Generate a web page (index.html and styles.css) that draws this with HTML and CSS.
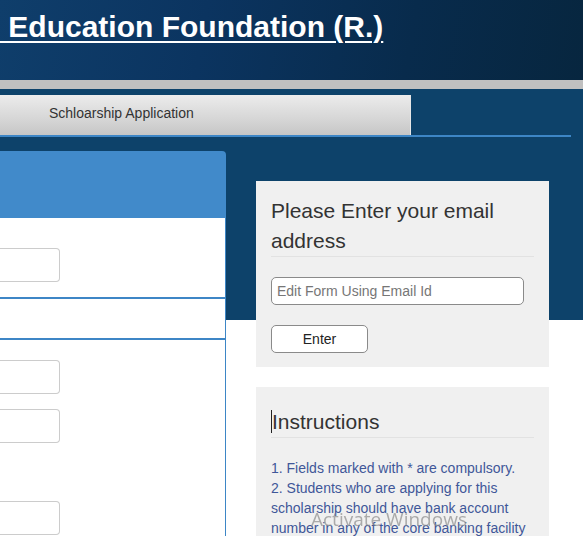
FILE: index.html
```html
<!DOCTYPE html>
<html>
<head>
<meta charset="utf-8">
<link rel="stylesheet" href="styles.css">
</head>
<body>
<header class="site-header">
  <h1 class="site-title"><a href="#">&nbsp;Education Foundation (R.)</a></h1>
</header>
<div class="gray-bar"></div>
<div class="main">
  <nav class="nav">
    <div class="tab">Schloarship Application</div>
  </nav>
  <div class="nav-line"></div>
  <div class="content">
    <section class="form-panel">
      <div class="panel-head"></div>
      <div class="panel-body">
        <div class="field first"><div class="input"></div></div>
        <div class="sub-bar"></div>
        <div class="field f2"><div class="input"></div></div>
        <div class="field f3"><div class="input"></div></div>
        <div class="field f4"><div class="input"></div></div>
      </div>
    </section>
    <aside class="side">
      <div class="card">
        <h3 class="card-title">Please Enter your email address</h3>
        <hr class="rule">
        <input class="email" type="text" placeholder="Edit Form Using Email Id">
        <button class="enter-btn">Enter</button>
      </div>
      <div class="card card-instr">
        <h3 class="card-title"><span class="caret"></span>Instructions</h3>
        <hr class="rule">
        <p class="instr">1. Fields marked with * are compulsory.<br>2. Students who are applying for this scholarship should have bank account number in any of the core banking facility</p>
      </div>
    </aside>
  </div>
</div>
<div class="watermark">Activate Windows</div>
</body>
</html>
```

FILE: styles.css
```css
html, body {
  margin: 0;
  padding: 0;
  overflow: hidden;
}
body {
  font-family: "Liberation Sans", Arial, sans-serif;
  background: #ffffff;
  width: 583px;
  height: 536px;
}
.site-header {
  height: 80px;
  background: linear-gradient(100deg, #0f3e6b 0%, #0b3460 35%, #082b4c 70%, #07263f 100%);
}
.site-title {
  margin: 0;
  padding-top: 9px;
  font-size: 30px;
  font-weight: bold;
  line-height: 36px;
}
.site-title a {
  color: #ffffff;
  text-decoration: underline;
  text-decoration-thickness: 2px;
  text-underline-offset: 4px;
}
.gray-bar {
  height: 9px;
  background: #c0c0c0;
}
.main {
  background: linear-gradient(#0d426a 0, #0d426a 231px, #ffffff 231px);
  height: 447px;
  overflow: hidden;
}
.nav {
  padding-top: 6px;
  display: flex;
}
.tab {
  width: 411px;
  height: 40px;
  box-sizing: border-box;
  border-right: 1px solid #e6e6e6;
  background: linear-gradient(#ececec, #d6d6d6 60%, #c6c6c6);
  color: #333333;
  font-size: 14px;
  line-height: 36px;
  padding-left: 49px;
}
.nav-line {
  width: 571px;
  height: 2px;
  background: #3d86c6;
}
.content {
  display: flex;
  gap: 30px;
  align-items: flex-start;
}
.form-panel {
  width: 226px;
  margin-top: 14px;
}
.panel-head {
  height: 67px;
  background: #418aca;
  border-top-right-radius: 4px;
}
.panel-body {
  background: #ffffff;
  border-right: 1px solid #3d86c6;
  height: 318px;
  box-sizing: border-box;
  overflow: hidden;
}
.field {
  display: flex;
}
.input {
  width: 60px;
  height: 34px;
  box-sizing: border-box;
  border: 1px solid #cccccc;
  border-left: none;
  border-radius: 0 4px 4px 0;
  background: #ffffff;
}
.first { padding-top: 30px; padding-bottom: 15px; }
.sub-bar {
  height: 39px;
  border-top: 2px solid #3d86c6;
  border-bottom: 2px solid #3d86c6;
}
.f2 { padding-top: 20px; }
.f3 { padding-top: 15px; }
.f4 { padding-top: 58px; }
.side {
  width: 293px;
  margin-top: 44px;
  display: flex;
  flex-direction: column;
  gap: 20px;
}
.card {
  background: #f0f0f0;
  padding: 15px 15px 14px 15px;
}
.card-instr {
  padding-top: 20px;
  padding-bottom: 0;
  height: 149px;
  box-sizing: border-box;
  overflow: hidden;
}
.card-title {
  margin: 0;
  font-size: 21px;
  font-weight: normal;
  line-height: 30px;
  color: #333333;
}
.caret {
  display: inline-block;
  width: 1px;
  height: 23px;
  background: #222222;
  vertical-align: -4px;
}
.rule {
  margin: 0 0 20px 0;
  border: none;
  border-top: 1px solid #e2e2e2;
  height: 0;
}
.email {
  display: block;
  width: 253px;
  height: 28px;
  box-sizing: border-box;
  border: 1px solid #8a8a8a;
  border-radius: 5px;
  padding: 0 5px;
  font-family: "Liberation Sans", Arial, sans-serif;
  font-size: 14px;
  background: #ffffff;
  margin-bottom: 20px;
  outline: none;
}
.email::placeholder {
  color: #767676;
}
.enter-btn {
  display: block;
  width: 97px;
  height: 28px;
  box-sizing: border-box;
  border: 1px solid #8a8a8a;
  border-radius: 5px;
  background: #ffffff;
  font-family: "Liberation Sans", Arial, sans-serif;
  font-size: 14px;
  color: #222222;
  padding: 0;
}
.instr {
  margin: 0;
  font-size: 14px;
  line-height: 20px;
  color: #3f5799;
}
.watermark {
  position: fixed;
  left: 311px;
  top: 506px;
  font-family: "Open Sans", "Noto Sans", sans-serif;
  font-size: 19px;
  color: rgba(140, 140, 140, 0.7);
  pointer-events: none;
}
```
